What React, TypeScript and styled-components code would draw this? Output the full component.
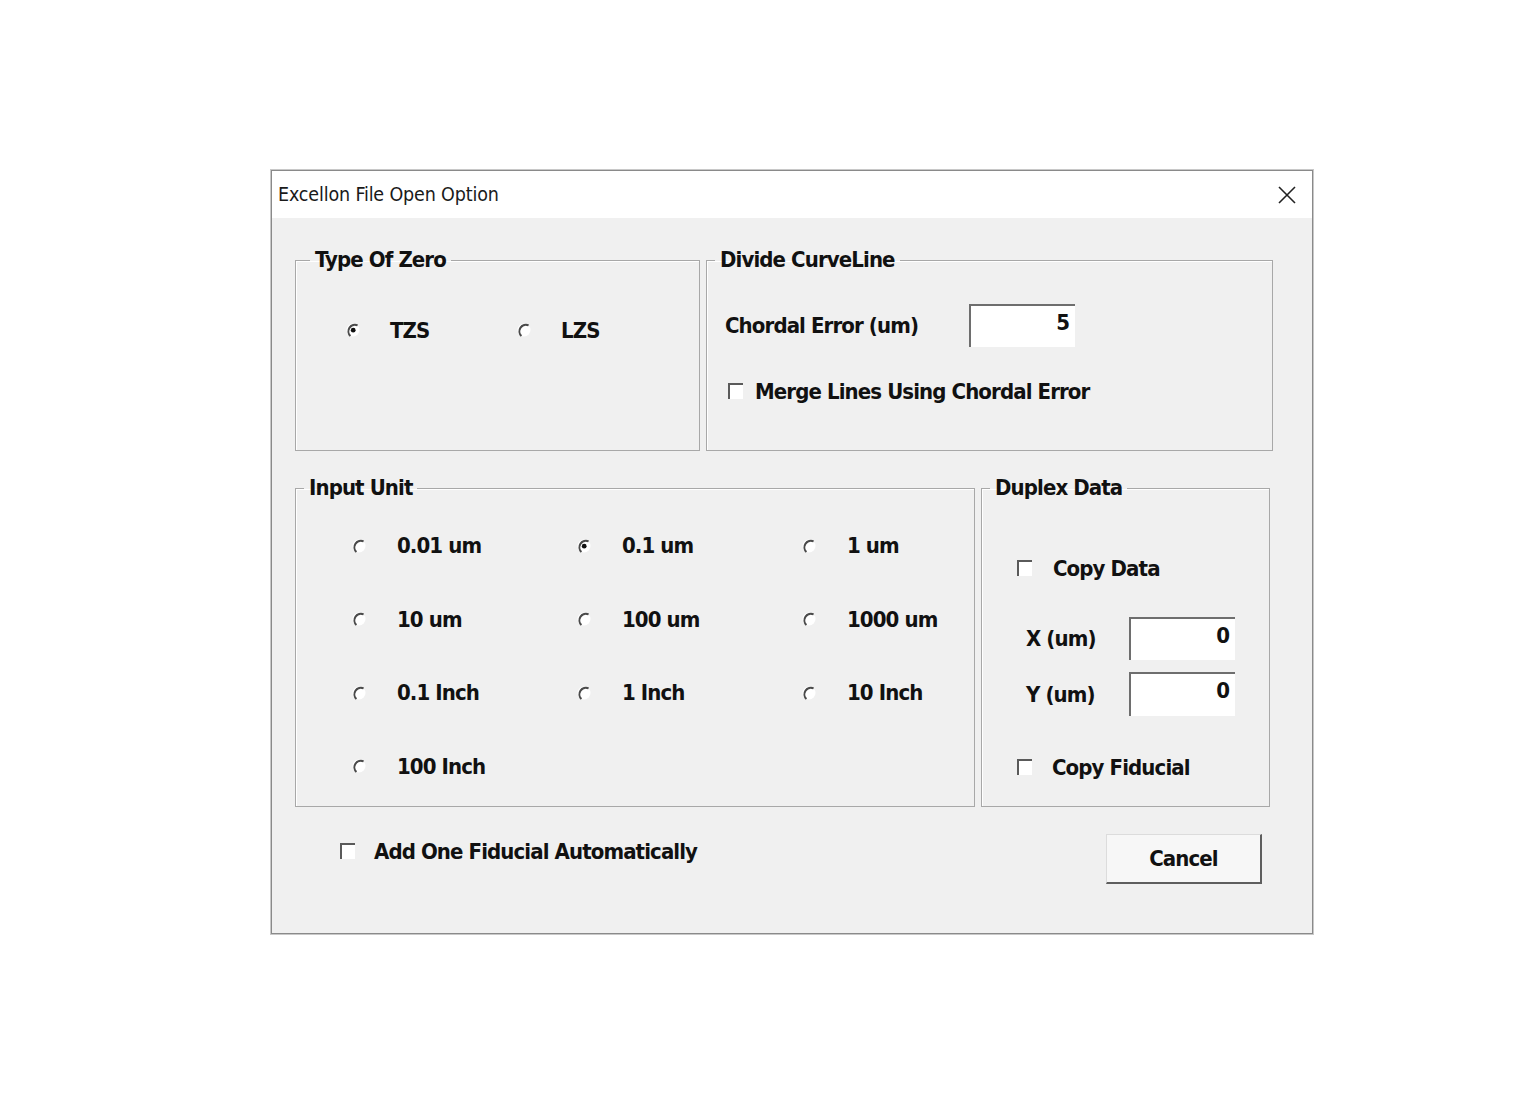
import React from 'react'
import styled, { createGlobalStyle } from 'styled-components'

const GlobalStyle = createGlobalStyle`
  html, body {
    margin: 0;
    padding: 0;
    background: #ffffff;
  }
  body {
    font-family: "Liberation Sans Narrow", "DejaVu Sans Condensed", "Liberation Sans", sans-serif;
    color: #111;
  }
`

const Page = styled.div`
  width: 1529px;
  height: 1100px;
  box-sizing: border-box;
  padding: 170px 0 0 271px;
`

const Dialog = styled.div`
  width: 1042px;
  height: 764px;
  box-sizing: border-box;
  border: 1px solid #8a8a8a;
  box-shadow: 0 0 0 1px #c8c8c8;
  background: #f0f0f0;
  display: flex;
  flex-direction: column;
`

const TitleBar = styled.div`
  height: 47px;
  flex: none;
  background: #ffffff;
  display: flex;
  align-items: center;
  justify-content: space-between;
  padding: 0 14px 0 6px;
`

const Title = styled.span`
  font-size: 19.5px;
  font-weight: 400;
  letter-spacing: -0.15px;
  color: #1a1a1a;
`

const CloseBtn = styled.button`
  width: 22px;
  height: 22px;
  padding: 0;
  border: none;
  background: transparent;
  display: flex;
  align-items: center;
  justify-content: center;
`

const Body = styled.div`
  flex: 1;
  display: flex;
  flex-direction: column;
  padding: 29px 0 0 23px;
`

const Row = styled.div<{ $gap: number; $top?: number }>`
  display: flex;
  gap: ${p => p.$gap}px;
  margin-top: ${p => p.$top ?? 0}px;
`

const Group = styled.fieldset<{ $w: number; $h: number }>`
  margin: 0;
  padding: 0;
  min-width: 0;
  width: ${p => p.$w}px;
  height: ${p => p.$h}px;
  box-sizing: border-box;
  border: 1px solid #a8a8a8;
  box-shadow: inset 1px 1px 0 #ffffff;
`

const text = `
  font-size: 22px;
  font-weight: 700;
  letter-spacing: -0.9px;
  color: #111;
`

const Legend = styled.legend<{ $indent?: number }>`
  margin-left: ${p => p.$indent ?? 8}px;
  padding: 0 5px;
  line-height: 26px;
  ${text}
`

const Label = styled.span`
  ${text}
  white-space: nowrap;
`

const ZeroRow = styled.div`
  display: flex;
  padding: 42px 0 0 49px;
`

const Option = styled.label<{ $w: number; $h: number; $gap: number }>`
  width: ${p => p.$w}px;
  height: ${p => p.$h}px;
  display: flex;
  align-items: center;
  gap: ${p => p.$gap}px;
`

const UnitGrid = styled.div`
  display: grid;
  grid-template-columns: repeat(3, 225px);
  grid-auto-rows: 73.5px;
  padding: 8px 0 0 55px;
`

const CurveBody = styled.div`
  display: flex;
  flex-direction: column;
  padding: 31px 0 0 18px;
`

const FieldRow = styled.div<{ $labelW: number; $top?: number; $left?: number }>`
  display: grid;
  grid-template-columns: ${p => p.$labelW}px auto;
  align-items: center;
  margin-top: ${p => p.$top ?? 0}px;
  margin-left: ${p => p.$left ?? 0}px;
`

const NumBox = styled.div<{ $w: number; $h: number }>`
  width: ${p => p.$w}px;
  height: ${p => p.$h}px;
  box-sizing: border-box;
  background: #ffffff;
  border-top: 2px solid #6e6e6e;
  border-left: 2px solid #6e6e6e;
  display: flex;
  align-items: flex-start;
  justify-content: flex-end;
  padding: 4px 6px 0 0;
  ${text}
`

const Check = styled.label<{ $gap: number; $top?: number; $left?: number }>`
  display: flex;
  align-items: center;
  gap: ${p => p.$gap}px;
  height: 28px;
  margin-top: ${p => p.$top ?? 0}px;
  margin-left: ${p => p.$left ?? 0}px;
`

const Box = styled.span`
  width: 15px;
  height: 16px;
  flex: none;
  box-sizing: border-box;
  background: #ffffff;
  border-top: 2px solid #5a5a5a;
  border-left: 2px solid #5a5a5a;
`

const DuplexBody = styled.div`
  display: flex;
  flex-direction: column;
  padding: 53px 0 0 35px;
`

const Footer = styled.div`
  display: flex;
  justify-content: space-between;
  align-items: flex-start;
  margin-top: 27px;
  padding: 0 50px 0 45px;
`

const Button = styled.button`
  width: 156px;
  height: 50px;
  box-sizing: border-box;
  background: #f7f7f7;
  border: none;
  border-top: 1px solid #dcdcdc;
  border-left: 1px solid #dcdcdc;
  border-right: 2px solid #5e5e5e;
  border-bottom: 2px solid #5e5e5e;
  font-family: inherit;
  ${text}
  padding: 0;
`

const Radio = ({ on }: { on?: boolean }) => (
  <svg width="16" height="16" viewBox="0 0 16 16" style={{ flex: 'none' }}>
    <circle cx="8" cy="8" r="6.5" fill="#ffffff" />
    <path d="M5.4 14 A6.5 6.5 0 0 1 12.6 3.4" fill="none" stroke="#4a4a4a" strokeWidth="2" />
    {on && <circle cx="8.2" cy="8.2" r="2.4" fill="#111" />}
  </svg>
)

const CloseIcon = () => (
  <svg width="20" height="20" viewBox="0 0 20 20">
    <path d="M2 2 L18 18 M18 2 L2 18" stroke="#222" strokeWidth="1.6" />
  </svg>
)

const units = [
  { label: '0.01 um' },
  { label: '0.1 um', on: true },
  { label: '1 um' },
  { label: '10 um' },
  { label: '100 um' },
  { label: '1000 um' },
  { label: '0.1 Inch' },
  { label: '1 Inch' },
  { label: '10 Inch' },
  { label: '100 Inch' },
]

export default function App() {
  return (
    <>
      <GlobalStyle />
      <Page>
        <Dialog>
          <TitleBar>
            <Title>Excellon File Open Option</Title>
            <CloseBtn><CloseIcon /></CloseBtn>
          </TitleBar>
          <Body>
            <Row $gap={6}>
              <Group $w={405} $h={204}>
                <Legend $indent={14}>Type Of Zero</Legend>
                <ZeroRow>
                  <Option $w={171} $h={30} $gap={29}>
                    <Radio on />
                    <Label>TZS</Label>
                  </Option>
                  <Option $w={171} $h={30} $gap={29}>
                    <Radio />
                    <Label>LZS</Label>
                  </Option>
                </ZeroRow>
              </Group>
              <Group $w={567} $h={204}>
                <Legend $indent={8}>Divide CurveLine</Legend>
                <CurveBody>
                  <FieldRow $labelW={244}>
                    <Label>Chordal Error (um)</Label>
                    <NumBox $w={106} $h={43}>5</NumBox>
                  </FieldRow>
                  <Check $gap={12} $top={30} $left={3}>
                    <Box />
                    <Label>Merge Lines Using Chordal Error</Label>
                  </Check>
                </CurveBody>
              </Group>
            </Row>
            <Row $gap={6} $top={24}>
              <Group $w={680} $h={332}>
                <Legend $indent={8}>Input Unit</Legend>
                <UnitGrid>
                  {units.map(u => (
                    <Option key={u.label} $w={225} $h={73.5} $gap={30}>
                      <Radio on={u.on} />
                      <Label>{u.label}</Label>
                    </Option>
                  ))}
                </UnitGrid>
              </Group>
              <Group $w={289} $h={332}>
                <Legend $indent={8}>Duplex Data</Legend>
                <DuplexBody>
                  <Check $gap={21}>
                    <Box />
                    <Label>Copy Data</Label>
                  </Check>
                  <FieldRow $labelW={103} $top={35} $left={9}>
                    <Label>X (um)</Label>
                    <NumBox $w={106} $h={43}>0</NumBox>
                  </FieldRow>
                  <FieldRow $labelW={103} $top={12} $left={9}>
                    <Label>Y (um)</Label>
                    <NumBox $w={106} $h={44}>0</NumBox>
                  </FieldRow>
                  <Check $gap={20} $top={37}>
                    <Box />
                    <Label>Copy Fiducial</Label>
                  </Check>
                </DuplexBody>
              </Group>
            </Row>
            <Footer>
              <Check $gap={19} $top={3}>
                <Box />
                <Label>Add One Fiducial Automatically</Label>
              </Check>
              <Button>Cancel</Button>
            </Footer>
          </Body>
        </Dialog>
      </Page>
    </>
  )
}
